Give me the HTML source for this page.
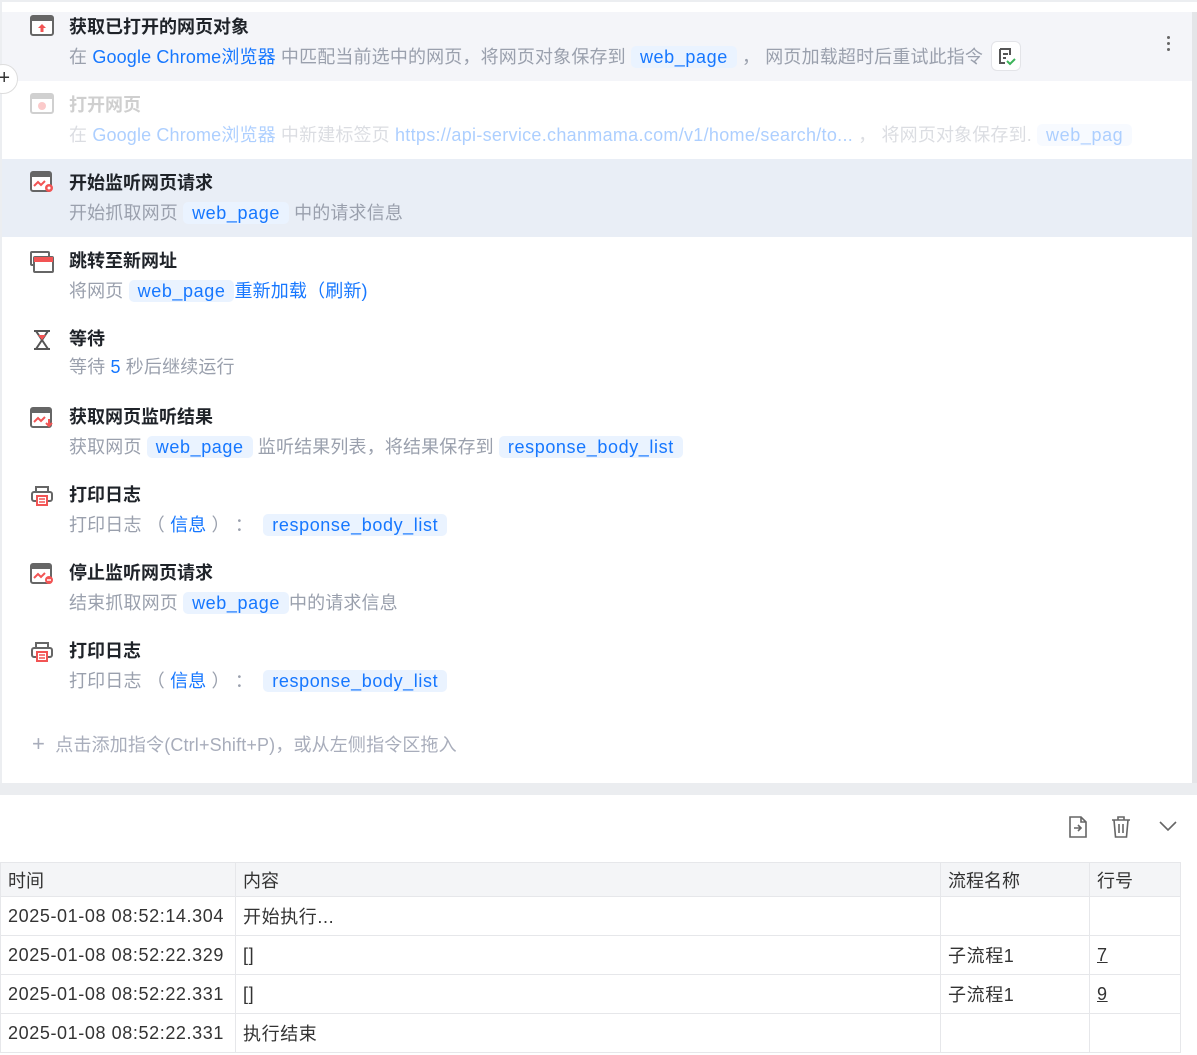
<!DOCTYPE html>
<html><head><meta charset="utf-8"><style>
*{margin:0;padding:0;box-sizing:border-box}
body{width:1197px;height:1055px;background:#fff;position:relative;overflow:hidden;font-family:"Liberation Sans","Noto Sans CJK SC",sans-serif;}
.a{position:absolute;white-space:nowrap}
.t{font-size:18px;font-weight:bold;color:#1f2329}
.d{font-size:18px;color:#9aa0ad;letter-spacing:0.15px}
.b{color:#1677ff}
.v{background:#eaf3ff;color:#1677ff;border-radius:5px;padding:1px 9px;letter-spacing:0.6px}
.row{position:absolute;left:2px;width:1190px;height:78px}
.ic{position:absolute;left:30px;width:24px;height:22px}
.tbl{position:absolute;left:0;top:862px;border-collapse:collapse;table-layout:fixed;width:1180px;font-size:18px;color:#333;letter-spacing:0.6px}
.tbl td{border:1px solid #e6e7ea;height:39px;padding:0 7px;vertical-align:middle;white-space:nowrap;overflow:hidden}
.tbl tr.h td{background:#f4f5f7;height:34px;letter-spacing:0}
</style></head><body>
<div class="a" style="left:0;top:0;width:1197px;height:2px;background:#eceef1"></div>
<div class="a" style="left:0;top:0;width:2px;height:790px;background:#eceef1"></div>
<div class="a" style="left:1192px;top:12px;width:5px;height:775px;background:#e4e5e8"></div>
<div class="a" style="left:0;top:783px;width:1197px;height:12px;background:#ebedf0"></div>

<div class="row" style="top:12px;height:69px;background:#f4f5f9"></div>
<div class="row" style="top:159px;background:#e9eef6"></div>
<div class="a" style="left:-12px;top:64px;width:30px;height:30px;border-radius:50%;background:#fff;border:1px solid #ddd;font-size:20px;line-height:26px;text-align:right;padding-right:7px;color:#333">+</div>

<svg class="ic" style="top:15px" viewBox="0 0 24 22"><rect x="1" y="1" width="22" height="19" rx="2" fill="#fff" stroke="#666" stroke-width="2"/><rect x="1" y="1" width="22" height="5" fill="#666"/><path d="M12 9l-4 4h2.5v4h3v-4H16z" fill="#f25454"/></svg>
<svg class="ic" style="top:93px;opacity:.3" viewBox="0 0 24 22"><rect x="1" y="1" width="22" height="19" rx="2" fill="#fff" stroke="#666" stroke-width="2"/><rect x="1" y="1" width="22" height="5" fill="#666"/><circle cx="12" cy="13" r="4" fill="#f25454"/></svg>
<svg class="ic" style="top:171px" viewBox="0 0 24 22"><rect x="1" y="1" width="20" height="19" rx="2" fill="#fff" stroke="#666" stroke-width="2"/><rect x="1" y="1" width="20" height="5" fill="#666"/><path d="M4 15l4-4 3 3 4-4" stroke="#f25454" stroke-width="2" fill="none"/><circle cx="19" cy="17" r="4" fill="#f25454"/><circle cx="19" cy="17" r="1.5" fill="#fff"/></svg>
<svg class="ic" style="top:251px" viewBox="0 0 24 22"><rect x="1" y="1" width="18" height="13" rx="1" fill="#fff" stroke="#666" stroke-width="2"/><rect x="4" y="6" width="19" height="15" rx="1" fill="#fff" stroke="#666" stroke-width="2"/><rect x="4" y="6" width="19" height="5" fill="#f25454"/></svg>
<svg class="ic" style="top:329px" viewBox="0 0 24 22"><path d="M4 2h16M4 20h16M6 2l12 18M18 2L6 20" stroke="#555" stroke-width="2" fill="none"/><path d="M8 6h8l-4 5z" fill="#f25454"/></svg>
<svg class="ic" style="top:407px" viewBox="0 0 24 22"><rect x="1" y="1" width="20" height="19" rx="2" fill="#fff" stroke="#666" stroke-width="2"/><rect x="1" y="1" width="20" height="5" fill="#666"/><path d="M4 15l4-4 3 3 4-4" stroke="#f25454" stroke-width="2" fill="none"/><path d="M19 12v6M16 16l3 3 3-3" stroke="#f25454" stroke-width="2" fill="none"/></svg>
<svg class="ic" style="top:485px" viewBox="0 0 24 22"><rect x="6" y="2" width="12" height="5" fill="#fff" stroke="#666" stroke-width="2"/><rect x="2" y="7" width="20" height="9" rx="2" fill="#fff" stroke="#666" stroke-width="2"/><rect x="7" y="11" width="10" height="9" fill="#fff" stroke="#f25454" stroke-width="2"/><path d="M9 14h6M9 17h6" stroke="#f25454" stroke-width="1.5"/></svg>
<svg class="ic" style="top:563px" viewBox="0 0 24 22"><rect x="1" y="1" width="20" height="19" rx="2" fill="#fff" stroke="#666" stroke-width="2"/><rect x="1" y="1" width="20" height="5" fill="#666"/><path d="M4 15l4-4 3 3 4-4" stroke="#f25454" stroke-width="2" fill="none"/><circle cx="19" cy="17" r="4" fill="#f25454"/><path d="M17 17h4" stroke="#fff" stroke-width="1.5"/></svg>
<svg class="ic" style="top:641px" viewBox="0 0 24 22"><rect x="6" y="2" width="12" height="5" fill="#fff" stroke="#666" stroke-width="2"/><rect x="2" y="7" width="20" height="9" rx="2" fill="#fff" stroke="#666" stroke-width="2"/><rect x="7" y="11" width="10" height="9" fill="#fff" stroke="#f25454" stroke-width="2"/><path d="M9 14h6M9 17h6" stroke="#f25454" stroke-width="1.5"/></svg>

<div class="a t" style="left:69px;top:13px">获取已打开的网页对象</div>
<div class="a d" style="left:69px;top:43px">在 <span class="b">Google Chrome浏览器</span> 中匹配当前选中的网页，将网页对象保存到 <span class="v">web_page</span> ， 网页加载超时后重试此指令</div>
<div class="a" style="left:991px;top:41px;width:30px;height:30px;border:1px solid #e3e4e8;border-radius:6px;background:#fff"><svg width="28" height="28" viewBox="0 0 28 28"><path d="M8 7h10v6M8 7v14h5M11 12h5M11 16h3" stroke="#555" stroke-width="2" fill="none"/><path d="M15 19l3 3 5-5" stroke="#3cb45a" stroke-width="2" fill="none"/></svg></div>
<div class="a" style="left:1167px;top:36px;width:4px"><div style="width:3px;height:3px;border-radius:50%;background:#666;margin-bottom:3px"></div><div style="width:3px;height:3px;border-radius:50%;background:#666;margin-bottom:3px"></div><div style="width:3px;height:3px;border-radius:50%;background:#666"></div></div>

<div style="opacity:.35">
<div class="a t" style="left:69px;top:91px;color:#777">打开网页</div>
<div class="a d" style="left:69px;top:121px">在 <span class="b">Google Chrome浏览器</span> 中新建标签页 <span class="b" style="letter-spacing:0.3px">https://api-service.chanmama.com/v1/home/search/to...</span> ， 将网页对象保存到. <span class="v">web_pag</span></div>
</div>
<div class="a" style="left:1145px;top:116px;width:47px;height:34px;background:#fff"></div>

<div class="a t" style="left:69px;top:169px">开始监听网页请求</div>
<div class="a d" style="left:69px;top:199px">开始抓取网页 <span class="v">web_page</span> 中的请求信息</div>

<div class="a t" style="left:69px;top:247px">跳转至新网址</div>
<div class="a d" style="left:69px;top:277px">将网页 <span class="v">web_page</span><span class="b">重新加载（刷新)</span></div>

<div class="a t" style="left:69px;top:325px">等待</div>
<div class="a d" style="left:69px;top:353px">等待 <span class="b">5</span> 秒后继续运行</div>

<div class="a t" style="left:69px;top:403px">获取网页监听结果</div>
<div class="a d" style="left:69px;top:433px">获取网页 <span class="v">web_page</span> 监听结果列表，将结果保存到 <span class="v">response_body_list</span></div>

<div class="a t" style="left:69px;top:481px">打印日志</div>
<div class="a d" style="left:69px;top:511px">打印日志 （ <span class="b">信息</span> ） ： &nbsp;<span class="v">response_body_list</span></div>

<div class="a t" style="left:69px;top:559px">停止监听网页请求</div>
<div class="a d" style="left:69px;top:589px">结束抓取网页 <span class="v">web_page</span>中的请求信息</div>

<div class="a t" style="left:69px;top:637px">打印日志</div>
<div class="a d" style="left:69px;top:667px">打印日志 （ <span class="b">信息</span> ） ： &nbsp;<span class="v">response_body_list</span></div>

<div class="a d" style="left:32px;top:731px;color:#a8adbb"><span style="font-size:22px;font-weight:300">+</span>&nbsp; 点击添加指令(Ctrl+Shift+P)，或从左侧指令区拖入</div>

<svg class="a" style="left:1067px;top:815px" width="22" height="24" viewBox="0 0 22 24"><path d="M3 2h11l5 5v15H3z M14 2v5h5" stroke="#666" stroke-width="1.6" fill="none"/><path d="M7 13h7M11 10l3 3-3 3" stroke="#666" stroke-width="1.6" fill="none"/></svg>
<svg class="a" style="left:1110px;top:815px" width="22" height="24" viewBox="0 0 22 24"><path d="M2 5h18M8 5V2h6v3M4 5l1.5 17h11L18 5M9 9v9M13 9v9" stroke="#666" stroke-width="1.6" fill="none"/></svg>
<svg class="a" style="left:1158px;top:818px" width="20" height="16" viewBox="0 0 20 16"><path d="M2 4l8 8 8-8" stroke="#666" stroke-width="1.6" fill="none"/></svg>

<table class="tbl">
<colgroup><col style="width:235px"><col style="width:705px"><col style="width:149px"><col style="width:91px"></colgroup>
<tr class="h"><td>时间</td><td>内容</td><td>流程名称</td><td>行号</td></tr>
<tr><td>2025-01-08 08:52:14.304</td><td>开始执行...</td><td></td><td></td></tr>
<tr><td>2025-01-08 08:52:22.329</td><td>[]</td><td>子流程1</td><td><u>7</u></td></tr>
<tr><td>2025-01-08 08:52:22.331</td><td>[]</td><td>子流程1</td><td><u>9</u></td></tr>
<tr><td>2025-01-08 08:52:22.331</td><td>执行结束</td><td></td><td></td></tr>
</table>
</body></html>
